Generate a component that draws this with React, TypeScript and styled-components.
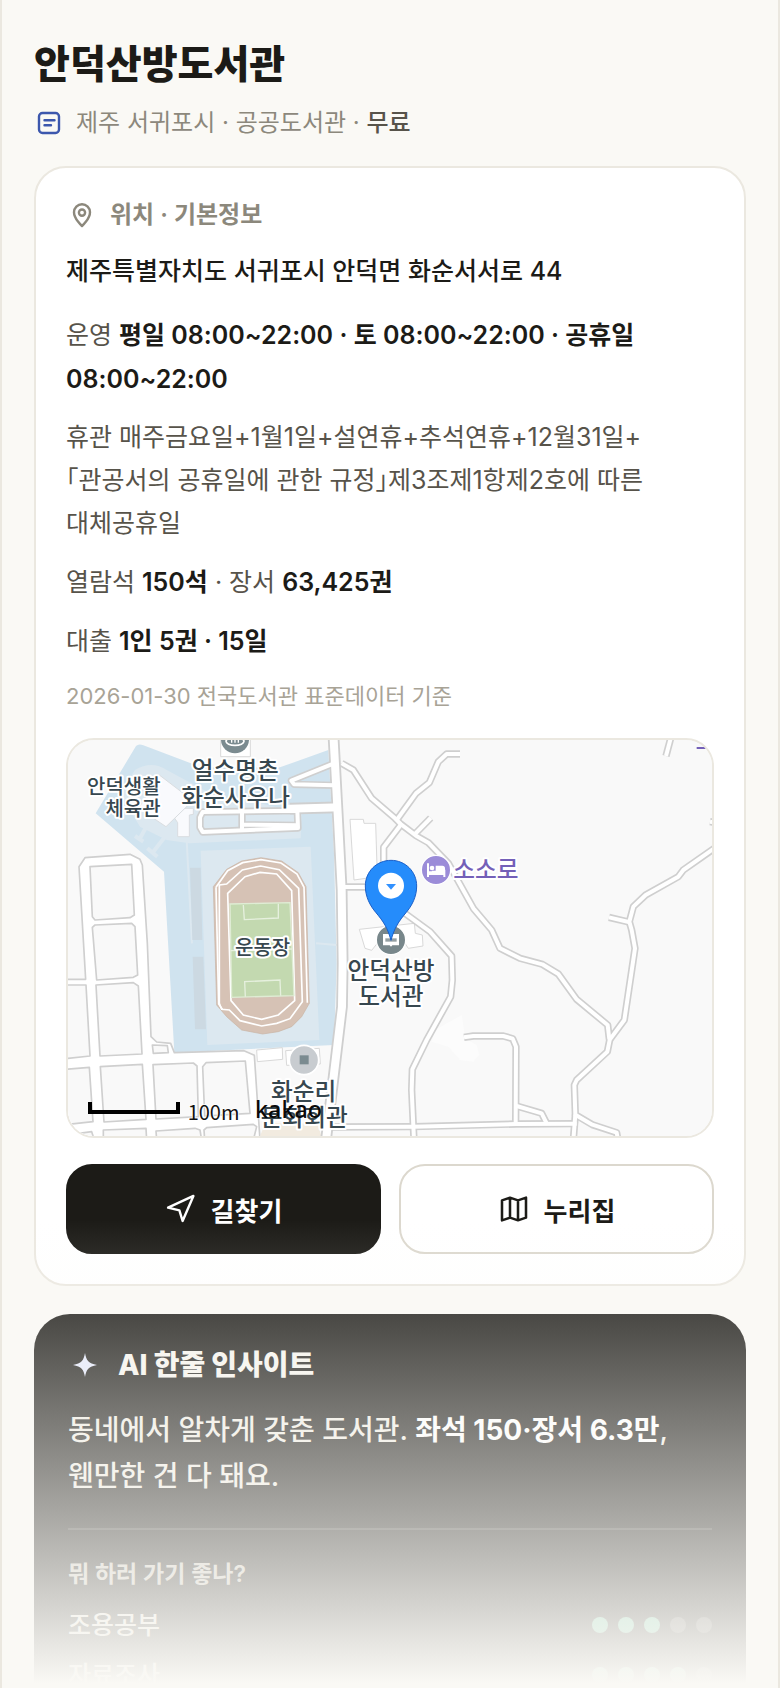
import React from "react";
import styled, { createGlobalStyle } from "styled-components";

const sans = `Inter, "Noto Sans CJK KR", "Noto Sans", sans-serif`;
const korean = `"Noto Sans CJK KR", "Noto Sans", sans-serif`;

const color = {
  paper: "#faf9f5",
  card: "#ffffff",
  ink: "#1c1b17",
  body: "#57534a",
  muted: "#8c887c",
  faint: "#a8a396",
  line: "#ebe8e0",
  lineStrong: "#dcd8ce",
  blue: "#3c57ad",
};

const GlobalStyle = createGlobalStyle`
  * { box-sizing: border-box; }
  body {
    margin: 0;
    background: ${color.paper};
    color: ${color.ink};
    font-family: ${sans};
    word-break: keep-all;
  }
`;

const Page = styled.main`
  position: relative;
  height: 100vh;
  overflow: hidden;
  padding: 36px 32px 0;
  border: solid ${color.line};
  border-width: 0 2px;
  background: ${color.paper};
`;

const Header = styled.header`
  display: flex;
  flex-direction: column;
  gap: 10px;
  margin-bottom: 22px;
`;

const Title = styled.h1`
  margin: 0;
  font-size: 39px;
  line-height: 56px;
  font-weight: 800;
`;

const Meta = styled.p`
  display: flex;
  align-items: center;
  gap: 12px;
  margin: 0;
  font-size: 24px;
  line-height: 42px;
  color: ${color.muted};
`;

const MetaStrong = styled.strong`
  font-weight: 500;
  color: ${color.body};
`;

const Card = styled.section`
  padding: 28px 30px 30px;
  border: 2px solid ${color.line};
  border-radius: 32px;
  background: ${color.card};
`;

const CardTitle = styled.h2`
  display: flex;
  align-items: center;
  gap: 12px;
  margin: 0 0 16px;
  font-size: 24px;
  line-height: 38px;
  font-weight: 600;
  color: ${color.muted};
`;

const Address = styled.p`
  margin: 0 0 21px;
  font-size: 25px;
  line-height: 42px;
  font-weight: 500;
`;

const Info = styled.p<{ $long?: boolean }>`
  margin: 0 0 15px;
  font-size: 25px;
  line-height: ${(p) => (p.$long ? 43 : 44)}px;
  font-feature-settings: "halt" 1;
  color: ${color.body};

  strong {
    font-weight: 600;
    color: ${color.ink};
  }
`;

const Source = styled.p`
  margin: 0 0 24px;
  font-size: 22px;
  line-height: 36px;
  color: ${color.faint};
`;

const MapFrame = styled.figure`
  height: 400px;
  margin: 0 0 26px;
  overflow: hidden;
  border: 2px solid ${color.line};
  border-radius: 28px;
  background: #f9f9f9;

  svg {
    display: block;
    width: 100%;
    height: 100%;
  }
`;

const Actions = styled.div`
  display: grid;
  grid-template-columns: 1fr 1fr;
  gap: 18px;
`;

const ActionButton = styled.button<{ $primary?: boolean }>`
  display: flex;
  align-items: center;
  justify-content: center;
  gap: 14px;
  height: 90px;
  border: 2px solid ${(p) => (p.$primary ? color.ink : color.lineStrong)};
  border-radius: 26px;
  background: ${(p) => (p.$primary ? color.ink : color.card)};
  color: ${(p) => (p.$primary ? "#fff" : color.ink)};
  font-family: ${sans};
  font-size: 26px;
  font-weight: 700;
`;

const InsightCard = styled.section`
  margin-top: 28px;
  padding: 30px 34px;
  border-radius: 36px;
  background: ${color.ink};
`;

const InsightTitle = styled.h2`
  display: flex;
  align-items: center;
  gap: 16px;
  margin: 0 0 21px;
  font-size: 28px;
  line-height: 42px;
  font-weight: 800;
  color: #f6f4ee;
`;

const InsightText = styled.p`
  margin: 0 0 29px;
  padding-bottom: 29px;
  border-bottom: 2px solid rgba(255, 255, 255, 0.14);
  font-size: 28px;
  line-height: 46px;
  font-weight: 500;
  color: #f0ede4;

  strong {
    font-weight: 700;
    color: #fff;
  }
`;

const InsightLabel = styled.h3`
  margin: 0 0 16px;
  font-size: 23px;
  line-height: 30px;
  font-weight: 600;
  color: #c6c2b8;
`;

const ScoreList = styled.ul`
  display: flex;
  flex-direction: column;
  gap: 10px;
  margin: 0;
  padding: 0;
  list-style: none;
`;

const ScoreRow = styled.li`
  display: flex;
  align-items: center;
  justify-content: space-between;
  font-size: 25px;
  line-height: 40px;
  font-weight: 500;
  color: #e4e1d8;
`;

const Dots = styled.span`
  display: flex;
  gap: 10px;
`;

const Dot = styled.i<{ $on: boolean }>`
  width: 16px;
  height: 16px;
  border-radius: 50%;
  background: ${(p) => (p.$on ? "#63bf9a" : "rgba(255, 255, 255, 0.24)")};
`;

const Fade = styled.div`
  position: absolute;
  inset: auto 0 0;
  height: 468px;
  pointer-events: none;
  background: linear-gradient(
    to bottom,
    rgba(250, 249, 245, 0),
    ${color.paper} 464px
  );
`;

const DocIcon = () => (
  <svg width="30" height="30" viewBox="0 0 30 30" fill="none" stroke={color.blue} strokeWidth="2.4" strokeLinecap="round" aria-hidden="true">
    <rect x="5" y="5" width="20" height="20" rx="3.5" />
    <path d="M10.5 12.3h10M10.5 17.3h6.5" />
  </svg>
);

const PlaceIcon = () => (
  <svg width="32" height="32" viewBox="0 0 32 32" fill="none" stroke={color.muted} strokeWidth="2.4" strokeLinejoin="round" aria-hidden="true">
    <path d="M16 27C16 27 8 19.8 8 13.2a8 8 0 0 1 16 0C24 19.8 16 27 16 27Z" />
    <circle cx="16" cy="13.6" r="3.1" />
  </svg>
);

const NavigateIcon = () => (
  <svg width="32" height="32" viewBox="0 0 24 24" fill="none" stroke="currentColor" strokeWidth="1.8" strokeLinecap="round" strokeLinejoin="round" aria-hidden="true">
    <path d="M2.300 11 21.300 2.200 13.200 21 10.800 13Z" />
  </svg>
);

const FoldedMapIcon = () => (
  <svg width="32" height="32" viewBox="0 0 24 24" fill="none" stroke="currentColor" strokeWidth="1.9" strokeLinejoin="round" aria-hidden="true">
    <path d="M3 5.500l6-2 6 2 6-2v15l-6 2-6-2-6 2ZM9 3.500v15M15 5.500v15" />
  </svg>
);

const SparkIcon = () => (
  <svg width="34" height="34" viewBox="0 0 34 34" fill="#e3e8fb" aria-hidden="true">
    <path d="M17 5c1.300 7.500 3.500 10.300 12 12-8.500 1.700-10.700 4.500-12 12-1.300-7.500-3.500-10.300-12-12 8.500-1.700 10.700-4.500 12-12Z" />
  </svg>
);

const blocks = [
  "M90 410 215 403 223 555 210 563 105 570 97 560Z",
  "M97 592 105 585 215 580 225 590 233 735 220 742 110 750Z",
  "M108 765 220 758 235 768 246 972 120 978Z",
  "M14 765 78 765 90 978 14 986Z",
  "M14 1018 88 1012 99 1175 14 1184Z",
  "M121 1010 247 1003 258 1168 132 1176Z",
  "M279 1004 400 999 411 1008 415 1160 288 1167Z",
  "M428 1010 438 998 556 993 570 1150 434 1158Z",
  "M130 1200 258 1195 260 1230 130 1230Z",
  "M288 1203 405 1195 420 1200 425 1230 290 1230Z",
  "M432 1200 440 1193 580 1183 590 1190 580 1230 434 1230Z",
  "M14 1216 95 1205 103 1230 14 1230Z",
  "M277 945 322 947 325 968 280 970Z",
];

const wideRoads = [
  "M820 10 833 250 845 480 848 700 846 830 815 1090 798 1230",
  "M690 236 830 232",
];

const roads = [
  "M845 100 880 120 935 205 1005 265 1022 282 1068 317 1105 338 1165 400 1240 535 1295 600 1320 655 1380 685 1447 703 1495 732 1550 808 1643 885 1648 928",
  "M1010 270 1068 190 1108 158 1135 95 1160 72 1200 72",
  "M1062 315 1112 264",
  "M1022 285 971 352 971 472",
  "M850 471 971 471 1035 550 1110 605 1175 678 1177 750 1172 800 1100 930 1057 1018 1055 1080 1062 1230",
  "M815 1191 1060 1190 1370 1182 1550 1181",
  "M1212 922 1240 918 1330 918 1358 926 1368 950 1367 1182",
  "M1370 1128 1445 1150 1460 1180",
  "M1650 925 1642 965 1550 1050 1543 1065 1546 1154 1597 1184 1670 1208 1674 1230",
  "M1546 1154 1540 1230",
  "M1970 350 1870 420 1855 440 1757 495 1720 530 1708 575 1715 600 1725 655 1693 870 1650 928",
  "M1647 562 1706 576",
  "M1836 10 1818 78",
  "M1970 278 1950 275",
  "M428 246 712 242 714 294 428 306 420 292 420 262Z",
  "M546 246 546 302M546 284 712 286",
  "M822 100 694 152 702 163 822 166",
];

type LabelProps = { x: number; y: number; size?: number; fill?: string; anchor?: "start" | "middle" | "end"; children: string };

const MapLabel = ({ x, y, size = 71, fill = "#37474f", anchor = "middle", children }: LabelProps) => (
  <text
    x={x}
    y={y}
    fontFamily={korean}
    fontSize={size}
    fontWeight={500}
    fill={fill}
    textAnchor={anchor}
    stroke="#fff"
    strokeWidth="12"
    strokeLinejoin="round"
    paintOrder="stroke"
  >
    {children}
  </text>
);

const LocationMap = () => (
  <svg viewBox="24 30 1932 1188" preserveAspectRatio="xMidYMid slice" role="img" aria-label="안덕산방도서관 지도">
    <rect x="-1000" y="-1000" width="4000" height="4000" fill="#f9f9f9" />

    <path fill="#d0e3ef" d="M228 48Q236 40 250 46L425 112 660 112 805 60 822 370 830 700 822 945 343 968 312 425 107 250Z" />
    <path fill="#dce8f0" d="M180 190 225 120Q275 90 320 120L470 200 560 210 725 250 722 325 388 340 320 330 240 290Z" />
    <path fill="#dce8f0" d="M422 362 752 350 778 930 442 945Z" />
    <path stroke="#dce8f0" strokeWidth="6" fill="none" d="M380 330 396 640M768 640 830 645" />
    <path stroke="#dce8f0" strokeWidth="12" fill="none" d="M262 285 240 325M225 318 250 335M315 320 280 365M262 355 292 380" />
    <path fill="#ccd9e2" d="M390 413 422 413 427 630 397 630ZM398 680 430 680 438 898 405 898Z" />
    <path fill="#f9fafd" stroke="#d9dde0" strokeWidth="3" d="M342 262 372 235 400 235 400 253 388 255 388 320 353 320 353 278Z" />
    <path fill="#f9fafd" stroke="#d9dde0" strokeWidth="3" d="M298 135 370 190 385 225 318 290 236 235Z" />

    <g fill="#fff" stroke="#d9d9d9" strokeWidth="3">
      <path d="M482 20H571V80H482Z" />
      <path d="M870 268 910 268 912 280 947 280 952 440 882 450Z" />
      <path d="M898 598 1063 580 1066 610 1087 615 1089 648 1045 655 1035 640 960 630 935 661 915 655Z" />
      <path d="M590 960 667 953 668 988 592 995ZM677 962 778 955 781 1002 680 1006Z" />
    </g>

    <path fill="#fff" stroke="#cfcfcf" strokeWidth="5" strokeLinejoin="round" d="M75 383 210 373 240 388 247 405 262 640 273 920 290 936 332 940 343 968 552 962 583 976 600 1230 14 1230 14 748 77 748 57 410Z" />
    <g fill="#f9f9f9" stroke="#cfcfcf" strokeWidth="5" strokeLinejoin="round">
      {blocks.map((d) => (
        <path key={d} d={d} />
      ))}
    </g>
    <path fill="#f2ebe0" d="M615 1180H772L788 1230H596Z" />
    <path fill="#fcfcfc" d="M1125 900 1205 855 1215 925 1250 945 1258 975 1240 995 1200 990 1165 950 1115 935Z" />

    <g fill="none" strokeLinejoin="round">
      <g stroke="#cfcfcf">
        {wideRoads.map((d) => (
          <path key={d} d={d} strokeWidth="35" />
        ))}
        {roads.map((d) => (
          <path key={d} d={d} strokeWidth="22" />
        ))}
      </g>
      <g stroke="#fff">
        {wideRoads.map((d) => (
          <path key={d} d={d} strokeWidth="24" strokeLinecap="square" />
        ))}
        {roads.map((d) => (
          <path key={d} d={d} strokeWidth="12" />
        ))}
      </g>
    </g>

    <path fill="#d6c2b5" stroke="#c9b3a5" strokeWidth="2" d="M460 470 500 418 545 393 603 383 665 393 715 428 738 470 748 820 725 860 695 890 655 905 608 912 545 900 500 860 470 825Z" />
    <g fill="none" stroke="#fff" strokeWidth="5">
      <path d="M468 472 503 422 548 398 603 389 663 399 711 432 732 472 742 818" />
      <path d="M478 465 500 462 547 420 602 408 658 419 716 475 727 815 690 866 650 880 605 888 540 872 508 840 485 838 478 820Z" />
      <path d="M503 490 555 440 600 427 650 432 695 482 704 812 655 855 605 868 550 855 513 812Z" />
      <path d="M468 472 476 822 487 838" />
    </g>
    <path fill="#c3d9b0" stroke="#dfecd4" strokeWidth="4" d="M510 522 690 518 702 797 515 802Z" />
    <path fill="none" stroke="#e6f0de" strokeWidth="4" d="M550 525 553 569 655 564 655 521M556 800 554 755 660 750 662 797M512 662 696 657" />

    <g>
      <circle cx="525" cy="28" r="42" fill="#7b8b90" />
      <ellipse cx="525" cy="34" rx="27" ry="12" fill="none" stroke="#fff" strokeWidth="5" />
      <path d="M515 20v18M525 20v18M535 20v18" stroke="#fff" strokeWidth="4" />
    </g>
    <g>
      <circle cx="1128" cy="420" r="44" fill="#9b8cd8" stroke="#fff" strokeWidth="4" />
      <path fill="#fff" d="M1101 400h6v24h9v-2h38v-3h2v22h-6v-6h-43v6h-6ZM1127 407h20q8 0 8 8v10h-28Z" />
      <circle cx="1116" cy="414" r="7" fill="#fff" />
    </g>
    <g>
      <circle cx="993" cy="630" r="44" fill="#78878b" stroke="#fff" strokeWidth="4" />
      <path fill="#fff" d="M969 612h20l4 4 4-4h20v34h-20l-4 4-4-4h-20Z" />
      <path fill="#67767b" d="M976 625h34v10h-34Z" opacity="0.7" />
    </g>
    <g>
      <circle cx="732" cy="990" r="44" fill="#c8ccd0" stroke="#fff" strokeWidth="5" />
      <rect x="719" y="976" width="27" height="27" fill="#7b8b90" />
    </g>

    <MapLabel x={526} y={147}>얼수명촌</MapLabel>
    <MapLabel x={527} y={227}>화순사우나</MapLabel>
    <MapLabel x={302} y={193} size={60} anchor="end">안덕생활</MapLabel>
    <MapLabel x={302} y={259} size={60} anchor="end">체육관</MapLabel>
    <MapLabel x={608} y={674} size={60}>운동장</MapLabel>
    <MapLabel x={1180} y={445} fill="#7460b8" anchor="start">소소로</MapLabel>
    <MapLabel x={993} y={746}>안덕산방</MapLabel>
    <MapLabel x={993} y={826}>도서관</MapLabel>
    <MapLabel x={731} y={1109}>화순리</MapLabel>
    <MapLabel x={733} y={1189}>문화회관</MapLabel>

    <path fill="#7460b8" d="M1910 51h29v6h-29Z" />

    <path fill="#258cfb" stroke="#1a5fc8" strokeWidth="3" d="M993 391C1036 391 1070 425 1070 468 1070 500 1056 527 1038 548 1016 574 1003 594 993 631 983 594 970 574 948 548 930 527 916 500 916 468 916 425 950 391 993 391Z" />
    <circle cx="993" cy="467" r="39" fill="#fff" />
    <path fill="#3191ff" d="M978 462h30l-15 17Z" />

    <path fill="#000" d="M84 1116h12v24h252v-24h12v36H84Z" />
    <text x="383" y="1170" fontFamily={korean} fontSize="60" fontWeight={400} fill="#111" stroke="#fff" strokeWidth="5" paintOrder="stroke">
      100m
    </text>
    <text x="585" y="1163" fontFamily={`"Noto Sans", sans-serif`} fontSize="70" fontWeight={500} fill="#0a0a0a">
      kakao
    </text>
  </svg>
);

const scores = [
  { name: "조용공부", value: 3 },
  { name: "자료조사", value: 4 },
];

export default function App() {
  return (
    <>
      <GlobalStyle />
      <Page>
        <Header>
          <Title>안덕산방도서관</Title>
          <Meta>
            <DocIcon />
            <span>
              제주 서귀포시 · 공공도서관 · <MetaStrong>무료</MetaStrong>
            </span>
          </Meta>
        </Header>

        <Card>
          <CardTitle>
            <PlaceIcon />
            위치 · 기본정보
          </CardTitle>
          <Address>제주특별자치도 서귀포시 안덕면 화순서서로 44</Address>
          <Info>
            운영 <strong>평일 08:00~22:00 · 토 08:00~22:00 · 공휴일 08:00~22:00</strong>
          </Info>
          <Info $long>
            휴관 매주금요일+1월1일+설연휴+추석연휴+12월31일+「관공서의 공휴일에 관한 규정」제3조제1항제2호에 따른 대체공휴일
          </Info>
          <Info>
            열람석 <strong>150석</strong> · 장서 <strong>63,425권</strong>
          </Info>
          <Info>
            대출 <strong>1인 5권 · 15일</strong>
          </Info>
          <Source>2026-01-30 전국도서관 표준데이터 기준</Source>
          <MapFrame>
            <LocationMap />
          </MapFrame>
          <Actions>
            <ActionButton type="button" $primary>
              <NavigateIcon />
              길찾기
            </ActionButton>
            <ActionButton type="button">
              <FoldedMapIcon />
              누리집
            </ActionButton>
          </Actions>
        </Card>

        <InsightCard>
          <InsightTitle>
            <SparkIcon />
            AI 한줄 인사이트
          </InsightTitle>
          <InsightText>
            동네에서 알차게 갖춘 도서관. <strong>좌석 150·장서 6.3만</strong>, 웬만한 건 다 돼요.
          </InsightText>
          <InsightLabel>뭐 하러 가기 좋나?</InsightLabel>
          <ScoreList>
            {scores.map((s) => (
              <ScoreRow key={s.name}>
                {s.name}
                <Dots role="img" aria-label={`5점 중 ${s.value}점`}>
                  {[1, 2, 3, 4, 5].map((n) => (
                    <Dot key={n} $on={n <= s.value} />
                  ))}
                </Dots>
              </ScoreRow>
            ))}
          </ScoreList>
        </InsightCard>
        <Fade />
      </Page>
    </>
  );
}
